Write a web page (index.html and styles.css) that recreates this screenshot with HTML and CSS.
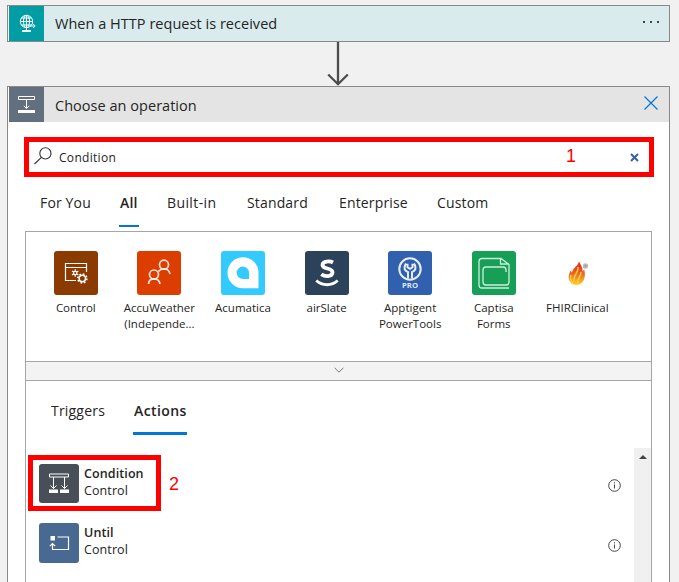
FILE: index.html
```html
<!DOCTYPE html>
<html lang="en">
<head>
<meta charset="utf-8">
<title>Choose an operation</title>
<link rel="stylesheet" href="styles.css">
</head>
<body>
<main class="designer">
  <section class="card">
    <div class="card-icon teal">
      <svg width="35" height="35" viewBox="0 0 35 35" fill="none" stroke="#fff" stroke-width="1">
        <circle cx="17.5" cy="15.500" r="6.200"/><ellipse cx="17.500" cy="15.500" rx="3" ry="6.200"/>
        <path d="M17.500 9v13M11.500 15.500h12M12.500 12h10M12.500 19h10M21 20h5M24.200 18l2 2-2 2M17.500 22v3"/>
        <path d="M13 25h9" stroke-width="2"/>
      </svg>
    </div>
    <h1 class="card-title">When a HTTP request is received</h1>
    <svg class="more" width="18" height="4" viewBox="0 0 18 4" fill="#444"><path d="M1 1h2v2H1zM8 1h2v2H8zM15 1h2v2h-2z"/></svg>
  </section>
  <svg class="connector" width="24" height="44" viewBox="0 0 24 44" fill="none" stroke="#4d4d4d" stroke-width="2"><path d="M12 0v42M2.200 32.500L12 42.200l9.800-9.700" stroke-width="2.300"/></svg>
  <section class="panel">
    <header class="panel-head">
      <div class="card-icon slate">
        <svg width="35" height="35" viewBox="0 0 35 35" fill="none" stroke="#fff">
          <path d="M9.500 9.500h16v3h-16zM17.500 13v8.500M14.800 18.800l2.700 2.700 2.700-2.700"/><path d="M9 24.500h17" stroke-width="3"/>
        </svg>
      </div>
      <h2 class="card-title">Choose an operation</h2>
      <svg class="close" width="14" height="14" viewBox="0 0 14 14" fill="none" stroke="#0078d7" stroke-width="1.200"><path d="M.5.5l13 13M13.500.5l-13 13"/></svg>
    </header>
    <div class="search">
      <svg class="lens" width="18" height="18" viewBox="0 0 18 18" fill="none" stroke="#333" stroke-width="1.100"><circle cx="11.400" cy="6.400" r="5.600"/><path d="M7.400 10.400L.5 17"/></svg>
      <span class="query">Condition</span>
      <span class="mark">1</span>
      <svg class="clear" width="9" height="9" viewBox="0 0 9 9" stroke="#3d61a5" stroke-width="2.100"><path d="M1 1l7 7M8 1L1 8"/></svg>
    </div>
    <nav class="tabs">
      <span class="tab foryou">For You</span>
      <span class="tab all">All</span>
      <span class="tab built">Built-in</span>
      <span class="tab standard">Standard</span>
      <span class="tab enterprise">Enterprise</span>
      <span class="tab custom">Custom</span>
    </nav>
    <div class="results">
      <div class="connectors">
        <div class="connector-item">
          <svg class="tile" viewBox="0 0 44 44"><rect width="44" height="44" rx="3" fill="#8b3a00"/>
            <g fill="none" stroke="#fff" stroke-width="1.200"><path d="M22 29.500H11.500v-17h21V21M11.500 16.500h21"/><circle cx="28.300" cy="27.500" r="3.200" stroke-width="1.400"/><circle cx="28.300" cy="27.500" r="4.500" stroke-width="1.600" stroke-dasharray="1.700 1.834"/><circle cx="21.200" cy="22" r="1.700"/><path d="M21.200 18.300v2M21.200 23.700v2M18 20.100l1.700 1M22.800 23l1.600.9M18 23.900l1.700-.9M22.800 21l1.600-.9"/></g>
          </svg><span>Control</span>
        </div>
        <div class="connector-item">
          <svg class="tile" viewBox="0 0 44 44"><rect width="44" height="44" rx="3" fill="#dc3e00"/>
            <g fill="none" stroke="#fff" stroke-opacity=".85" stroke-width="1.700"><circle cx="27" cy="13.700" r="4.500"/><circle cx="17" cy="23.500" r="4.500"/><path d="M11.500 33c.2-3 2-5.200 5.500-5.200s5.500 2.200 6 5.200M21.500 20.500c1-1.700 2.700-2.500 5.500-2.500 3.500 0 5.500 2.200 6 5.200"/></g>
          </svg><span>AccuWeather<br>(Independe...</span>
        </div>
        <div class="connector-item">
          <svg class="tile" viewBox="0 0 44 44"><rect width="44" height="44" rx="3" fill="#33cbff"/>
            <path d="M37.500 37.200H22A15.500 15.500 0 1 1 37.500 21.700z" fill="#fff"/><path d="M28 28h-6a6.200 6.200 0 1 1 6-6z" fill="#33cbff"/>
          </svg><span>Acumatica</span>
        </div>
        <div class="connector-item">
          <svg class="tile" viewBox="0 0 44 44"><rect width="44" height="44" rx="3" fill="#2c425b"/>
            <path d="M28 11.500c-2.500-1.400-10.500-2-10.500 2.500 0 4.800 10 2.200 10 7.300 0 4.700-7.500 4.700-11.200 2" fill="none" stroke="#fff" stroke-width="3.800"/><path d="M11.300 29.500c6 5.500 15.400 5.500 21.400 0" fill="none" stroke="#fff" stroke-width="3"/>
          </svg><span>airSlate</span>
        </div>
        <div class="connector-item">
          <svg class="tile" viewBox="0 0 44 44"><rect width="44" height="44" rx="3" fill="#3160ae"/>
            <g fill="none" stroke="#e8eef8" stroke-width="2"><circle cx="22" cy="18" r="10.700"/><path d="M20 27.500v-6.300c-3-1.500-4.200-4-3-6.700l1-2M24 27.500v-6.300c3-1.500 4.200-4 3-6.700l-1-2M19.500 12.800v3.500l2.500 1.500 2.500-1.500v-3.500"/></g>
            <text class="pro" x="22" y="37" text-anchor="middle" textLength="16" lengthAdjust="spacingAndGlyphs">PRO</text>
          </svg><span>Apptigent<br>PowerTools</span>
        </div>
        <div class="connector-item">
          <svg class="tile" viewBox="0 0 44 44"><rect width="44" height="44" rx="3" fill="#189f57"/>
            <g fill="none" stroke="#c9f0d9" stroke-width="1.300"><path d="M37 37H10c-2 0-3-1-3-3V10.500c0-2 1-3 3-3h19l8 6V31c0 2-1 3-3 3H14c-2 0-3-1-3-3V19c0-2 1-3 3-3h17c2 0 3 1 3 3v2M28.500 8v5H37"/></g>
          </svg><span>Captisa<br>Forms</span>
        </div>
        <div class="connector-item">
          <svg class="tile" viewBox="0 0 44 44"><defs><linearGradient id="flame" x1="0" x2="0" y1="0" y2="1"><stop offset="0" stop-color="#d9271c"/><stop offset=".5" stop-color="#ec6425"/><stop offset="1" stop-color="#ffd21b"/></linearGradient></defs>
            <path d="M24 10.500c2 4 4 6 3.500 10l1.700-2c2 7-.2 14.500-7.200 15.500-6 0-9.500-5-8-10.500l1.500-4 1.500 2c1-5 6-6.500 7-11z" fill="url(#flame)"/><path d="M23 16c1 6-5.500 8-4 15M26 21c0 5-4 6-3.500 11M16 24c-1 3 0 6 2 8" fill="none" stroke="#ffd642" stroke-width="1.300"/><circle cx="30.500" cy="15" r="2.700" fill="#bbb"/><circle cx="30.500" cy="15" r="1" fill="#999"/>
          </svg><span>FHIRClinical</span>
        </div>
      </div>
      <div class="expander"><svg width="10" height="6" viewBox="0 0 10 6" fill="none" stroke="#777"><path d="M.5.700L5 5.200 9.500.700"/></svg></div>
      <nav class="kinds"><span class="kind triggers">Triggers</span><span class="kind actions">Actions</span></nav>
      <div class="list-area">
        <div class="operations">
          <div class="operation">
            <div class="choice marked">
              <svg class="op-icon" viewBox="0 0 40 39"><rect width="40" height="39" rx="3" fill="#484f58"/><g fill="none" stroke="#fff"><path d="M10.500 10h19v3h-19zM14.500 13v11.500M25.500 13v11.500M11.500 21.500l3 3 3-3M22.500 21.500l3 3 3-3"/><path d="M10 27.300h9M21 27.300h9" stroke-width="3.500"/></g></svg>
              <div class="op-text"><b>Condition</b><span>Control</span></div>
            </div>
            <span class="mark two">2</span>
            <svg class="info" viewBox="0 0 13 13" fill="none" stroke="#444"><circle cx="6.500" cy="6.500" r="5.800"/><path d="M6.500 5.500V9.500M6.500 3.200v1.200"/></svg>
          </div>
          <div class="operation">
            <div class="choice">
              <svg class="op-icon until-icon" viewBox="0 0 40 40"><rect width="40" height="40" rx="3" fill="#486991"/><path d="M11.500 13h4.500v4.500h-4.500z" fill="#fff"/><path d="M18.500 14h11v12.500h-16v-6M10.800 23.200l2.700-2.700 2.700 2.700" fill="none" stroke="#fff" stroke-width="1.200"/></svg>
              <div class="op-text"><b>Until</b><span>Control</span></div>
            </div>
            <svg class="info" viewBox="0 0 13 13" fill="none" stroke="#444"><circle cx="6.500" cy="6.500" r="5.800"/><path d="M6.500 5.500V9.500M6.500 3.200v1.200"/></svg>
          </div>
        </div>
        <div class="scrollbar"><svg width="8" height="4" viewBox="0 0 8 4"><path d="M0 4l4-4 4 4z" fill="#444"/></svg></div>
      </div>
    </div>
  </section>
</main>
</body>
</html>
```
FILE: styles.css
```css
* { box-sizing: border-box; }
html, body { height: 100%; }
body {
  margin: 0;
  overflow: hidden;
  background: #f1f1f1;
  color: #252525;
  font-family: "Open Sans", "Noto Sans", sans-serif;
}
svg { display: block; flex: none; }
.designer {
  display: flex;
  flex-direction: column;
  height: 582px;
  padding: 5px 9px 0 7px;
}
.card {
  display: flex;
  flex: none;
  align-items: center;
  height: 37px;
  padding-right: 9px;
  border: 1px solid #8c8888;
  background: #d9ebed;
}
.card-icon {
  flex: none;
  width: 36px;
  height: 35px;
  border-left: 1px solid #fff;
}
.teal { background: #009da5; }
.slate { background: #626f7e; }
.card-title {
  flex: 1;
  margin: 0 0 0 11px;
  padding-top: 1px;
  font-size: 14.5px;
  line-height: 36px;
  font-weight: 400;
  letter-spacing: 0.03px;
  white-space: nowrap;
}
.more { margin-top: -4px; }
.connector { flex: none; margin-left: 319px; }
.panel {
  display: flex;
  flex: 1;
  flex-direction: column;
  min-height: 0;
  border: 1px solid #8c8888;
  border-bottom: 0;
  background: #fff;
}
.panel-head {
  display: flex;
  flex: none;
  height: 35px;
  padding-right: 11px;
  background: #e4e4e4;
}
.close { margin-top: 9px; }
.search {
  display: flex;
  flex: none;
  align-items: center;
  height: 40px;
  margin: 15px 15px 0 16px;
  padding: 0 10px 0 5px;
  border: 5px solid #f00;
}
.query { flex: 1; margin-left: 7px; font-size: 12px; letter-spacing: 0.3px; }
.mark {
  color: #f00;
  font: 18px/20px "Liberation Sans", sans-serif;
}
.search .mark { margin: -2px 54px 0 0; }
.lens { margin-top: -3px; }
.tabs {
  display: flex;
  flex: none;
  height: 50px;
  margin-left: 32px;
  font-size: 14px;
  line-height: 52px;
  letter-spacing: 0.15px;
}
.tab { flex: none; white-space: nowrap; }
.foryou { width: 79px; }
.all { width: 20px; height: 50px; margin-right: 28px; padding-left: 1px; font-weight: 600; border-bottom: 2px solid #0078d7; }
.built { width: 80px; letter-spacing: 0.4px; }
.standard { width: 92px; }
.enterprise { width: 98px; }
.results {
  display: flex;
  flex: 1;
  flex-direction: column;
  min-height: 0;
  margin: 4px 17px 0;
  border: 1px solid #a6a6a6;
  border-bottom: 0;
}
.connectors {
  display: flex;
  flex: none;
  height: 129px;
  padding: 19px 0 0 8px;
}
.connector-item {
  display: flex;
  flex: none;
  flex-direction: column;
  align-items: center;
  width: 83.6px;
  font-size: 11.5px;
  line-height: 16px;
  text-align: center;
  white-space: nowrap;
}
.tile { width: 44px; height: 44px; margin-bottom: 5px; }
.pro { fill: #dce6f6; font: 700 7.5px "Open Sans", sans-serif; }
.expander {
  display: flex;
  flex: none;
  align-items: center;
  justify-content: center;
  height: 20px;
  padding-bottom: 3px;
  border: solid #a6a6a6;
  border-width: 1px 0;
  background: #f3f3f3;
}
.kinds {
  display: flex;
  flex: none;
  height: 54px;
  margin-left: 25px;
  font-size: 14px;
  line-height: 60px;
  letter-spacing: 0.2px;
}
.triggers { width: 82px; }
.actions { width: 54px; padding-left: 1px; font-weight: 600; letter-spacing: 0.4px; border-bottom: 3px solid #0078d7; }
.list-area { display: flex; flex: 1; min-height: 0; margin-top: 13px; }
.operations { flex: 1; padding: 7px 13px 0 2px; }
.operation { display: flex; align-items: center; height: 60px; }
.choice {
  display: flex;
  width: 133px;
  height: 56px;
  margin-top: -4px;
  padding: 4px 0 0 6px;
  border: 5px solid transparent;
}
.marked { border-color: #f00; }
.op-icon { width: 40px; height: 39px; }
.until-icon { height: 40px; margin-top: -1px; }
.op-text { display: flex; flex-direction: column; margin-left: 5px; padding-top: 1px; font-size: 12.5px; line-height: 17px; letter-spacing: 0.1px; white-space: nowrap; }
.op-text b { font-weight: 600; }
.until-icon + .op-text { padding-top: 0; }
.two { margin: -2px 0 0 8px; }
.info { width: 13px; height: 13px; margin-left: auto; }
.scrollbar { display: flex; flex: none; justify-content: center; width: 17px; padding-top: 7px; background: #f0f0f0; }
```
